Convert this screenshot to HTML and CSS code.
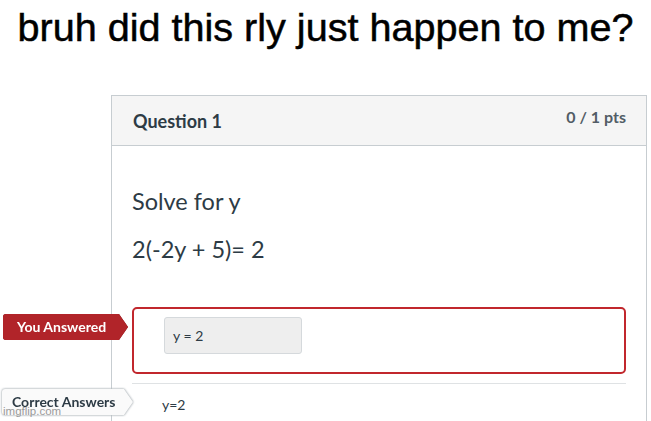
FILE: index.html
```html
<!DOCTYPE html>
<html lang="en">
<head>
  <meta charset="UTF-8" />
  <title>bruh</title>
  <link rel="stylesheet" href="styles.css">
</head>
<body>
  <h1 class="meme-title">bruh did this rly just happen to me?</h1>

  <div class="quiz-card">
    <div class="question-header">
      <span class="question-name">Question 1</span>
      <span class="question-points">0 / 1 pts</span>
    </div>

    <div class="question-body">
      <p>Solve for y</p>
      <p>2(-2y + 5)= 2</p>
    </div>

    <div class="answer-row wrong">
      <span class="answer-tag tag-wrong"><span class="tag-shape">You Answered</span></span>
      <div class="answer-box">
        <div class="answer-input">y = 2</div>
      </div>
    </div>

    <div class="answer-row correct">
      <span class="answer-tag tag-correct"><span class="tag-shape">Correct Answers</span></span>
      <div class="answer-text">y=2</div>
    </div>
  </div>

  <span class="watermark">imgflip.com</span>
</body>
</html>
```

FILE: styles.css
```css
* {
  box-sizing: border-box;
}

body {
  margin: 0;
  background-color: #fff;
  font-family: Lato, 'Noto Sans', sans-serif;
  color: #2d3b45;
  overflow: hidden;
  height: 421px;
  position: relative;
}

.meme-title {
  margin: 0;
  padding-top: 5px;
  height: 95px;
  text-align: center;
  font-family: 'Liberation Sans', Arial, sans-serif;
  font-weight: normal;
  font-size: 39.6px;
  line-height: 44px;
  color: #000;
  -webkit-text-stroke: 0.5px #000;
}

.quiz-card {
  margin: 0 4px 0 111px;
  border: 1px solid #c7cdd1;
  border-bottom: none;
  height: 326px;
}

.question-header {
  display: flex;
  justify-content: space-between;
  align-items: flex-start;
  height: 50px;
  padding: 0 20px 0 21px;
  background-color: #f5f5f5;
  border-bottom: 1px solid #c7cdd1;
}

.question-name {
  font-weight: bold;
  font-size: 18px;
  margin-top: 14px;
}

.question-points {
  font-weight: bold;
  font-size: 16px;
  color: #525d66;
  margin-top: 11px;
}

.question-body {
  padding: 42px 20px 0 20px;
  height: 161px;
}

.question-body p {
  margin: 0 0 21px;
  font-size: 23.5px;
  line-height: 27px;
}

.answer-row {
  position: relative;
  margin: 0 20px;
}

.answer-box {
  border: 2px solid #c1272d;
  border-radius: 5px;
  height: 67px;
  padding: 8px 30px;
}

.answer-input {
  width: 138px;
  height: 37px;
  line-height: 35px;
  padding-left: 8px;
  background-color: #eeeeee;
  border: 1px solid #d5d9dc;
  border-radius: 3px;
  font-size: 14px;
}

.answer-row.correct {
  margin-top: 9px;
  border-top: 1px solid #dfe2e4;
  padding: 12px 0 0 30px;
}

.answer-text {
  font-size: 14px;
}

.answer-tag {
  position: absolute;
  display: block;
}

.tag-shape {
  display: block;
  height: 26px;
  line-height: 26px;
  font-size: 14px;
  font-weight: bold;
  border-radius: 3px 0 0 3px;
  clip-path: polygon(0 0, calc(100% - 9px) 0, 100% 50%, calc(100% - 9px) 100%, 0 100%);
}

.tag-wrong {
  top: 7px;
  left: -129px;
  filter: drop-shadow(0 0 0.6px #7a1418);
}

.tag-wrong .tag-shape {
  width: 125px;
  padding-left: 14px;
  background-color: #b12429;
  color: #fff;
}

.tag-correct {
  top: 5px;
  left: -130px;
  filter: drop-shadow(0 0 1px #a9b0b5) drop-shadow(0 0 0.5px #c4c9cc);
}

.tag-correct .tag-shape {
  width: 131px;
  padding-left: 10px;
  background-color: #fafafa;
  color: #2d3b45;
}

.watermark {
  position: absolute;
  left: 3px;
  top: 405px;
  font-family: 'Liberation Sans', Arial, sans-serif;
  font-size: 11.5px;
  line-height: 13px;
  color: #9a9a9a;
}
```
